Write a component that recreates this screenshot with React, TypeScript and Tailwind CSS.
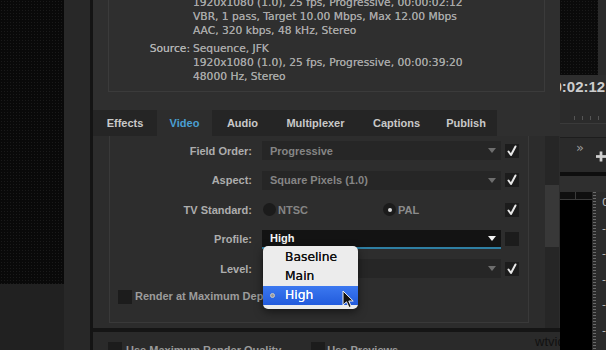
import React from 'react';

const ui = "font-['Liberation_Sans',Arial,sans-serif]";
const lucida = "font-['DejaVu_Sans',sans-serif]";

const CheckMark = () => (
  <svg viewBox="0 0 14 14" className="w-[14px] h-[14px]">
    <path d="M3.5 7.5 L6 11 L10.5 2.5" fill="none" stroke="#e8e8e8" strokeWidth="2" strokeLinecap="round" strokeLinejoin="round" />
  </svg>
);

const Checkbox: React.FC<{ checked?: boolean; className?: string }> = ({ checked, className = '' }) => (
  <div className={`w-[14px] h-[14px] bg-[#1c1c1c] flex items-center justify-center shrink-0 ${className}`}>
    {checked && <CheckMark />}
  </div>
);

const Caret: React.FC<{ light?: boolean }> = ({ light }) => (
  <svg viewBox="0 0 8 5" className="w-[8px] h-[5px]">
    <path d="M0 0 H8 L4 5 Z" fill={light ? '#f2f2f2' : '#6e6e6e'} />
  </svg>
);

const Select: React.FC<{ value: string; active?: boolean }> = ({ value, active }) => (
  <div
    className={
      active
        ? 'h-[19px] flex items-center justify-between pl-[8px] pr-[5px] bg-[#131313] border-b-2 border-[#2f7fa3] text-[#f4f4f4]'
        : 'h-[19px] flex items-center justify-between pl-[8px] pr-[5px] bg-[#262626] text-[#858585]'
    }
  >
    <span>{value}</span>
    <Caret light={active} />
  </div>
);

const Row: React.FC<{ label: string; checked?: boolean; children: React.ReactNode }> = ({ label, checked, children }) => (
  <div className="h-[29.5px] flex items-center">
    <div className="w-[142px] text-right text-[#adadad]">{label}</div>
    <div className="ml-[10px] w-[239px]">{children}</div>
    <Checkbox checked={checked} className="ml-[4px]" />
  </div>
);

const tabs = [
  { name: 'Effects', w: 'w-[64px]' },
  { name: 'Video', w: 'w-[55px]', active: true },
  { name: 'Audio', w: 'w-[61px]' },
  { name: 'Multiplexer', w: 'w-[85px]' },
  { name: 'Captions', w: 'w-[77px]' },
  { name: 'Publish', w: 'w-[62px]' },
];

export default function App() {
  return (
    <div className={`relative w-[606px] h-[350px] overflow-hidden flex bg-[#222] ${ui} text-[11px] font-bold`}>
      {/* left desktop edge */}
      <div className="w-[64px] flex flex-col shrink-0">
        <div className="h-[284px] bg-[#090909] bg-[radial-gradient(#1a1a1a_0.5px,transparent_0.8px)] bg-[length:3px_3px]" />
        <div className="flex-1 bg-[#212121]" />
      </div>
      <div className="w-[26px] bg-[#282828] shrink-0" />
      <div className="w-[3px] bg-[#141414] shrink-0" />

      {/* export settings panel */}
      <div className="w-[467px] shrink-0 flex flex-col bg-[#2f2f2f] overflow-hidden">
        <div className="h-[110px] shrink-0">
          <div className={`ml-[15px] w-[437px] border-x border-b border-[#3b3b3b] pb-[7px] ${lucida} font-normal text-[10.7px] leading-[14px] text-[#a8a8a8] [text-shadow:0_0_0.4px_#a8a8a8]`}>
            <div className="-mt-[4px] grid grid-cols-[81px_1fr] gap-x-[3px] whitespace-nowrap">
              <div />
              <div>
                <div>1920x1080 (1.0), 25 fps, Progressive, 00:00:02:12</div>
                <div>VBR, 1 pass, Target 10.00 Mbps, Max 12.00 Mbps</div>
                <div>AAC, 320 kbps, 48 kHz, Stereo</div>
              </div>
              <div className="mt-[4px] text-right text-[#b4b4b4]">Source:</div>
              <div className="mt-[4px]">
                <div>Sequence, JFK</div>
                <div>1920x1080 (1.0), 25 fps, Progressive, 00:00:39:20</div>
                <div>48000 Hz, Stereo</div>
              </div>
            </div>
          </div>
        </div>

        {/* tabs */}
        <div className="h-[26px] shrink-0 flex">
          {tabs.map(t => (
            <div
              key={t.name}
              className={`${t.w} h-full flex items-center justify-center ${
                t.active ? 'bg-[#2d2d2d] text-[#4a9fd3]' : 'bg-[#252525] text-[#c9c9c9]'
              }`}
            >
              {t.name}
            </div>
          ))}
        </div>

        {/* video tab content */}
        <div className="h-[192px] shrink-0 flex bg-[#2c2c2c]">
          <div className="ml-[16px] w-[420px] h-[187px] border-x border-b border-[#393939] bg-[#2d2d2d]">
            <Row label="Field Order:" checked>
              <Select value="Progressive" />
            </Row>
            <Row label="Aspect:" checked>
              <Select value="Square Pixels (1.0)" />
            </Row>
            <Row label="TV Standard:" checked>
              <div className="flex items-center h-[19px]">
                <div className="w-[120px] flex items-center">
                  <div className="ml-[1px] w-[13px] h-[13px] rounded-full bg-[#1b1b1b]" />
                  <span className="ml-[2px] text-[#858585]">NTSC</span>
                </div>
                <div className="flex items-center">
                  <div className="ml-[1px] w-[13px] h-[13px] rounded-full bg-[#1b1b1b] flex items-center justify-center">
                    <div className="w-[4px] h-[4px] rounded-full bg-[#d8d8d8]" />
                  </div>
                  <span className="ml-[2px] text-[#8c8c8c]">PAL</span>
                </div>
              </div>
            </Row>
            <Row label="Profile:">
              <Select value="High" active />
            </Row>
            <Row label="Level:" checked>
              <Select value="4.2" />
            </Row>
            <div className="h-[26px] flex items-center pl-[8px]">
              <Checkbox />
              <span className="ml-[3px] text-[#9c9c9c] whitespace-nowrap">Render at Maximum Depth</span>
            </div>
          </div>
          <div className="ml-[16px] w-[14px] h-full bg-[#262626] flex flex-col">
            <div className="mt-[49px] h-[62px] bg-[#383838]" />
          </div>
        </div>

        <div className="h-[4px] shrink-0 bg-[#151515]" />
        <div className="relative flex-1 bg-[#2a2a2a] flex items-start pt-[10px] pl-[15px] text-[#9a9a9a] whitespace-nowrap">
          <Checkbox />
          <span className="ml-[4px]">Use Maximum Render Quality</span>
          <Checkbox className="ml-[30px]" />
          <span className="ml-[2px]">Use Previews</span>
          <span className="absolute left-[442px] top-[0px] text-[13px] font-normal text-[#111]">wtvideo</span>
        </div>
      </div>

      {/* program monitor / meters edge */}
      <div className="w-[46px] shrink-0 flex flex-col overflow-hidden bg-[#2c2c2c]">
        <div className="h-[75px] shrink-0 flex">
          <div className="w-[38px] bg-[#0a0a0a] bg-[radial-gradient(#1a1a1a_0.5px,transparent_0.8px)] bg-[length:3px_3px]" />
          <div className="flex-1 bg-[#2b2b2b]" />
        </div>
        <div className="h-[25px] shrink-0 bg-[#2e2e2e] flex items-center overflow-hidden">
          <span className="-ml-[6.5px] text-[15px] text-[#cdcdcd] whitespace-nowrap">0:02:12</span>
        </div>
        <div className="h-[23px] shrink-0 bg-[#2b2b2b] flex flex-col justify-end pb-[3px]">
          <div className="ml-[14px] h-[4px] bg-[repeating-linear-gradient(to_right,#555_0_1px,transparent_1px_8px)]" />
        </div>
        <div className="h-[1px] shrink-0 bg-[#3a3a3a]" />
        <div className="h-[13px] shrink-0 bg-[#2e2e2e]" />
        <div className="h-[1px] shrink-0 bg-[#1d1d1d]" />
        <div className="h-[34px] shrink-0 bg-[#2a2a2a] flex items-start pl-[16px] pt-[3px]">
          <span className={`${lucida} font-normal text-[13px] leading-[14px] text-[#9a9a9a]`}>»</span>
          <svg viewBox="0 0 11 11" className="ml-[12px] mt-[10px] w-[11px] h-[11px]">
            <rect x="4" y="0" width="3" height="11" fill="#cfcfcf" />
            <rect x="0" y="4" width="11" height="3" fill="#cfcfcf" />
          </svg>
        </div>
        <div className="h-[4px] shrink-0 bg-[#0e0e0e]" />
        <div className="h-[16px] shrink-0 bg-[#2f2f2f]" />
        <div className="flex-1 flex">
          <div className="w-[32px] bg-black flex flex-col">
            <div className="h-[8px] flex gap-[1px] bg-[#3a3a3a] border-b border-[#3a3a3a]">
              <div className="w-[15px] bg-[#0f0f0f]" />
              <div className="flex-1 bg-[#0f0f0f]" />
            </div>
          </div>
          <div className="w-[14px] flex bg-[#2b2b2b] overflow-hidden">
            <div className="ml-[1px] w-[3px] shrink-0 bg-[repeating-linear-gradient(to_bottom,#6a6a6a_0_1px,transparent_1px_3px)]" />
            <div className={`ml-[6px] flex flex-col pt-[5px] ${lucida} font-normal text-[11px] leading-[12px] text-[#bdbdbd] whitespace-nowrap`}>
              {['0', '-6', '-12', '-18', '-24', '-30'].map(v => (
                <div key={v} className="h-[25.5px]">{v}</div>
              ))}
            </div>
          </div>
        </div>
      </div>

      {/* profile popup menu */}
      <div className={`absolute left-[263px] top-[246px] w-[95px] h-[63px] rounded-[5px] bg-[#ececec] shadow-[0_3px_8px_rgba(0,0,0,0.5)] pt-[2px] ${lucida} font-normal text-[12.3px] text-[#111] [text-shadow:0_0_0.5px_currentColor]`}>
        <div className="h-[19px] flex items-center pl-[22px]">Baseline</div>
        <div className="h-[19px] flex items-center pl-[22px]">Main</div>
        <div className="h-[19px] flex items-center bg-gradient-to-b from-[#3c78f0] to-[#225bdc] text-white">
          <div className="ml-[7px] w-[5px] h-[5px] rounded-full border border-[#c8c8c8] bg-[#9a9a9a]" />
          <span className="ml-[10px]">High</span>
        </div>
      </div>

      {/* mouse cursor */}
      <svg viewBox="0 0 13 19" className="absolute left-[342px] top-[290px] w-[13px] h-[19px]">
        <path d="M1 1 L1 15 L4.5 11.8 L7 17.5 L9.2 16.5 L6.8 11 L11.2 11 Z" fill="#111" stroke="#f0f0f0" strokeWidth="1" strokeLinejoin="round" />
      </svg>
    </div>
  );
}
